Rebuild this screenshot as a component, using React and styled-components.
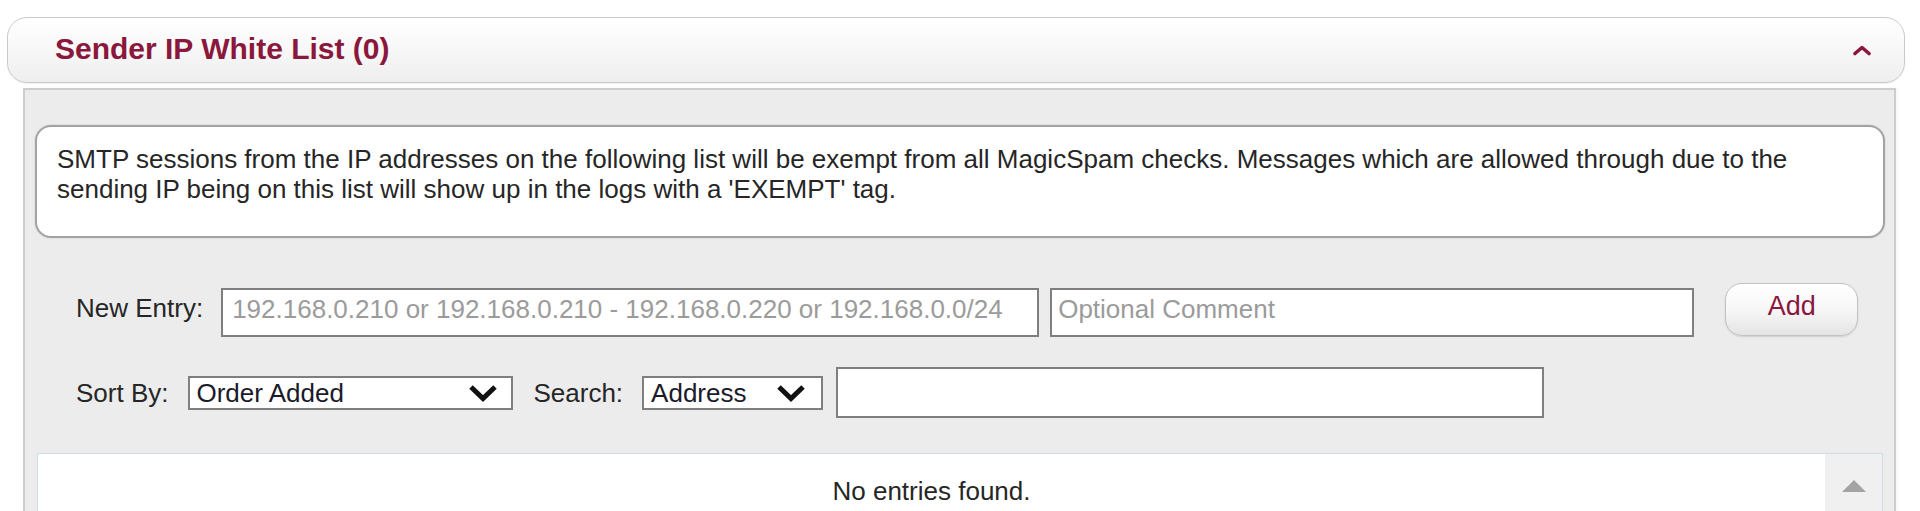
import React from "react";
import styled, { createGlobalStyle } from "styled-components";

const GlobalStyle = createGlobalStyle`
  html, body { margin: 0; padding: 0; background: #ffffff; }
  body {
    font-family: "Liberation Sans", Arial, sans-serif;
    color: #222222;
    overflow: hidden;
  }
  * { box-sizing: border-box; }
`;

const Page = styled.div`
  padding: 17px 15px 0 7px;
`;

const Header = styled.div`
  height: 66px;
  border: 1px solid #c5ccc5;
  border-radius: 20px;
  background: linear-gradient(to bottom, #ffffff 0%, #f8f8f8 45%, #eeeeee 100%);
  box-shadow: 0 1px 1px rgba(0, 0, 0, 0.06);
  display: flex;
  align-items: center;
  justify-content: space-between;
  padding: 0 32px 0 47px;
`;

const Title = styled.h2`
  margin: 0;
  font-size: 30px;
  font-weight: bold;
  line-height: 1;
  color: #8a173c;
  padding-bottom: 3px;
`;

const Body = styled.div`
  margin: 5px 9px 0 16px;
  border: 2px solid #cdcdcd;
  border-bottom: none;
  background: #ececec;
  padding: 35px 9px 0 10px;
  box-shadow: 2px 0 3px rgba(0, 0, 0, 0.04);
`;

const InfoBox = styled.div`
  background: #ffffff;
  border: 2px solid #a3a3a3;
  border-radius: 16px;
  box-shadow: 0 0 2px rgba(0, 0, 0, 0.15);
  padding: 17px 20px 32px 20px;
  font-size: 26px;
  line-height: 30px;
  color: #262626;
`;

const Form = styled.div`
  padding-left: 41px;
  margin-top: 45px;
`;

const Row = styled.div`
  display: flex;
  align-items: ${(p) => p.$align || "center"};
  margin-top: ${(p) => p.$mt || 0}px;
  height: ${(p) => p.$h}px;
`;

const Label = styled.span`
  font-size: 26px;
  line-height: ${(p) => p.$lh || 30}px;
  color: #262626;
  margin-left: ${(p) => p.$ml || 0}px;
  white-space: nowrap;
`;

const TextInput = styled.input`
  width: ${(p) => p.$w}px;
  height: ${(p) => p.$h || 49}px;
  margin-left: ${(p) => p.$ml || 0}px;
  margin-top: ${(p) => p.$mt || 0}px;
  border: 2px solid #7f7f7f;
  background: #ffffff;
  font-family: "Liberation Sans", Arial, sans-serif;
  font-size: 26px;
  color: #222222;
  padding: 0 ${(p) => p.$px || 9}px ${(p) => p.$pb || 0}px;
  outline: none;
  border-radius: 0;
  &::placeholder {
    color: #9b9b9b;
    opacity: 1;
  }
`;

const AddButton = styled.button`
  width: 133px;
  height: 53px;
  margin-left: ${(p) => p.$ml || 0}px;
  border: 1px solid #c2c2c2;
  border-radius: 17px;
  background: linear-gradient(to bottom, #ffffff 0%, #f7f7f7 50%, #e4e4e4 100%);
  box-shadow: 0 1px 2px rgba(0, 0, 0, 0.12);
  font-family: "Liberation Sans", Arial, sans-serif;
  font-size: 27px;
  color: #8a173c;
  padding: 0 0 6px 0;
  cursor: pointer;
`;

const SelectBox = styled.div`
  width: ${(p) => p.$w}px;
  height: 34px;
  margin-left: ${(p) => p.$ml || 0}px;
  border: 2px solid #7f7f7f;
  background: #ffffff;
  display: flex;
  align-items: center;
  justify-content: space-between;
  padding: 0 ${(p) => p.$pr}px 0 ${(p) => p.$pl}px;
  font-size: 26px;
  color: #1a1a2a;
  line-height: 30px;
`;

const List = styled.div`
  margin: 35px 2px 0 2px;
  height: 220px;
  background: #ffffff;
  border: 1px solid #cfdce4;
  display: flex;
`;

const ListContent = styled.div`
  flex: 1;
  text-align: center;
  padding-top: 22px;
  font-size: 26px;
  line-height: 30px;
  color: #262626;
`;

const ScrollTrack = styled.div`
  width: 57px;
  background: #f0f0f0;
  display: flex;
  justify-content: center;
  padding-top: 26px;
`;

const Chevron = () => (
  <svg width="20" height="12" viewBox="0 0 20 12">
    <path d="M3 9.5 L10 3.5 L17 9.5" fill="none" stroke="#8a173c" strokeWidth="3.6" strokeLinecap="round" strokeLinejoin="round" />
  </svg>
);

const SelectArrow = () => (
  <svg width="30" height="18" viewBox="0 0 30 18">
    <path d="M3 3 L15 14.5 L27 3" fill="none" stroke="#111111" strokeWidth="5" strokeLinejoin="miter" />
  </svg>
);

const UpArrow = () => (
  <svg width="24" height="12" viewBox="0 0 24 12">
    <path d="M12 0 L24 12 L0 12 Z" fill="#a3a3a3" />
  </svg>
);

export default function App() {
  return (
    <>
      <GlobalStyle />
      <Page>
        <Header>
          <Title>Sender IP White List (0)</Title>
          <Chevron />
        </Header>
        <Body>
          <InfoBox>
            SMTP sessions from the IP addresses on the following list will be exempt from all MagicSpam checks. Messages which are allowed through due to the
            <br />
            sending IP being on this list will show up in the logs with a 'EXEMPT' tag.
          </InfoBox>
          <Form>
            <Row $h={54} $align="flex-start">
              <Label $lh={50}>New Entry:</Label>
              <TextInput
                $w={818}
                $ml={18}
                $mt={5}
                $pb={6}
                placeholder="192.168.0.210 or 192.168.0.210 - 192.168.0.220 or 192.168.0.0/24"
              />
              <TextInput $w={644} $ml={11} $mt={5} $pb={6} $px={6} placeholder="Optional Comment" />
              <AddButton $ml={31}>Add</AddButton>
            </Row>
            <Row $h={51} $mt={30}>
              <Label>Sort By:</Label>
              <SelectBox $w={325} $ml={20} $pl={6} $pr={13}>
                <span>Order Added</span>
                <SelectArrow />
              </SelectBox>
              <Label $ml={20}>Search:</Label>
              <SelectBox $w={181} $ml={19} $pl={7} $pr={15}>
                <span>Address</span>
                <SelectArrow />
              </SelectBox>
              <TextInput $w={708} $h={51} $ml={13} />
            </Row>
          </Form>
          <List>
            <ListContent>No entries found.</ListContent>
            <ScrollTrack>
              <UpArrow />
            </ScrollTrack>
          </List>
        </Body>
      </Page>
    </>
  );
}
